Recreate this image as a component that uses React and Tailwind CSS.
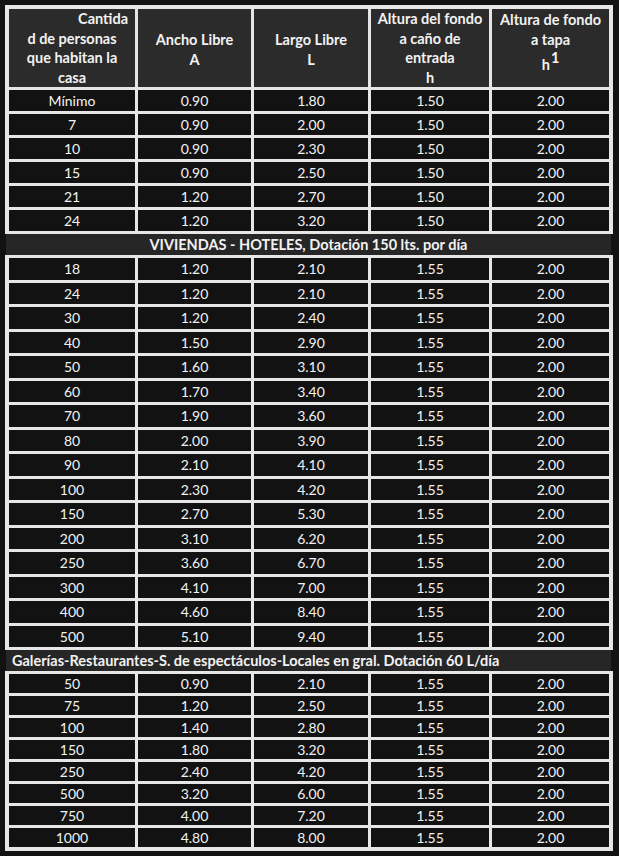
const seccion1 = [
  ["Mínimo", "0.90", "1.80", "1.50", "2.00"],
  ["7", "0.90", "2.00", "1.50", "2.00"],
  ["10", "0.90", "2.30", "1.50", "2.00"],
  ["15", "0.90", "2.50", "1.50", "2.00"],
  ["21", "1.20", "2.70", "1.50", "2.00"],
  ["24", "1.20", "3.20", "1.50", "2.00"],
];

const seccion2 = [
  ["18", "1.20", "2.10"],
  ["24", "1.20", "2.10"],
  ["30", "1.20", "2.40"],
  ["40", "1.50", "2.90"],
  ["50", "1.60", "3.10"],
  ["60", "1.70", "3.40"],
  ["70", "1.90", "3.60"],
  ["80", "2.00", "3.90"],
  ["90", "2.10", "4.10"],
  ["100", "2.30", "4.20"],
  ["150", "2.70", "5.30"],
  ["200", "3.10", "6.20"],
  ["250", "3.60", "6.70"],
  ["300", "4.10", "7.00"],
  ["400", "4.60", "8.40"],
  ["500", "5.10", "9.40"],
].map((r) => [...r, "1.55", "2.00"]);

const seccion3 = [
  ["50", "0.90", "2.10"],
  ["75", "1.20", "2.50"],
  ["100", "1.40", "2.80"],
  ["150", "1.80", "3.20"],
  ["250", "2.40", "4.20"],
  ["500", "3.20", "6.00"],
  ["750", "4.00", "7.20"],
  ["1000", "4.80", "8.00"],
].map((r) => [...r, "1.55", "2.00"]);

const gridCols = "grid grid-cols-[126px_113px_114px_118px_117px] gap-[3px] bg-[#e6e6e6] w-[608px] ml-[5px]";
const headCell = "bg-[#2b2b2b] h-[78px] font-bold text-[14.5px] leading-[19.5px] flex flex-col";

function Filas({ rows, h }) {
  return rows.map((r, i) =>
    r.map((v, j) => (
      <div key={`${i}-${j}`} className={`bg-[#121212] flex items-center justify-center ${h}`}>
        {v}
      </div>
    ))
  );
}

function Banda({ children, center }) {
  return (
    <div
      className={`ml-[6px] w-[605px] h-[21px] bg-[#262626] font-bold text-[14.5px] flex items-center ${
        center ? "justify-center" : "justify-start pl-[6px]"
      }`}
    >
      {children}
    </div>
  );
}

export default function App() {
  return (
    <div
      className="min-h-screen bg-[#121212] text-[#f2f2f2] text-[14px] pt-[5px]"
      style={{ fontFamily: "Lato, 'Open Sans', sans-serif" }}
    >
      <div className={`${gridCols} pt-[4px] px-[4px] pb-[3px]`}>
        <div className={`${headCell} justify-center`}>
          <div className="text-right pr-[7px]">Cantida</div>
          <div className="text-center">d de personas</div>
          <div className="text-center">que habitan la</div>
          <div className="text-center">casa</div>
        </div>
        <div className={`${headCell} justify-center items-center pt-[3px]`}>
          <div>Ancho Libre</div>
          <div>A</div>
        </div>
        <div className={`${headCell} justify-center items-center pt-[3px]`}>
          <div>Largo Libre</div>
          <div>L</div>
        </div>
        <div className={`${headCell} justify-center items-center`}>
          <div>Altura del fondo</div>
          <div>a caño de</div>
          <div>entrada</div>
          <div>h</div>
        </div>
        <div className={`${headCell} justify-start items-center pt-[1px]`}>
          <div>Altura de fondo</div>
          <div>a tapa</div>
          <div className="mt-[6px] flex items-start">
            <span>h</span>
            <span className="relative top-[-7px] ml-[1px]">1</span>
          </div>
        </div>
        <Filas rows={seccion1} h="h-[21px]" />
      </div>

      <Banda center>VIVIENDAS - HOTELES, Dotación 150 lts. por día</Banda>

      <div className={`${gridCols} p-[3px] px-[4px]`}>
        <Filas rows={seccion2} h="h-[21.5px]" />
      </div>

      <Banda>Galerías-Restaurantes-S. de espectáculos-Locales en gral. Dotación 60 L/día</Banda>

      <div className={`${gridCols} pt-[3px] px-[4px] pb-[4px]`}>
        <Filas rows={seccion3} h="h-[19px]" />
      </div>
    </div>
  );
}
